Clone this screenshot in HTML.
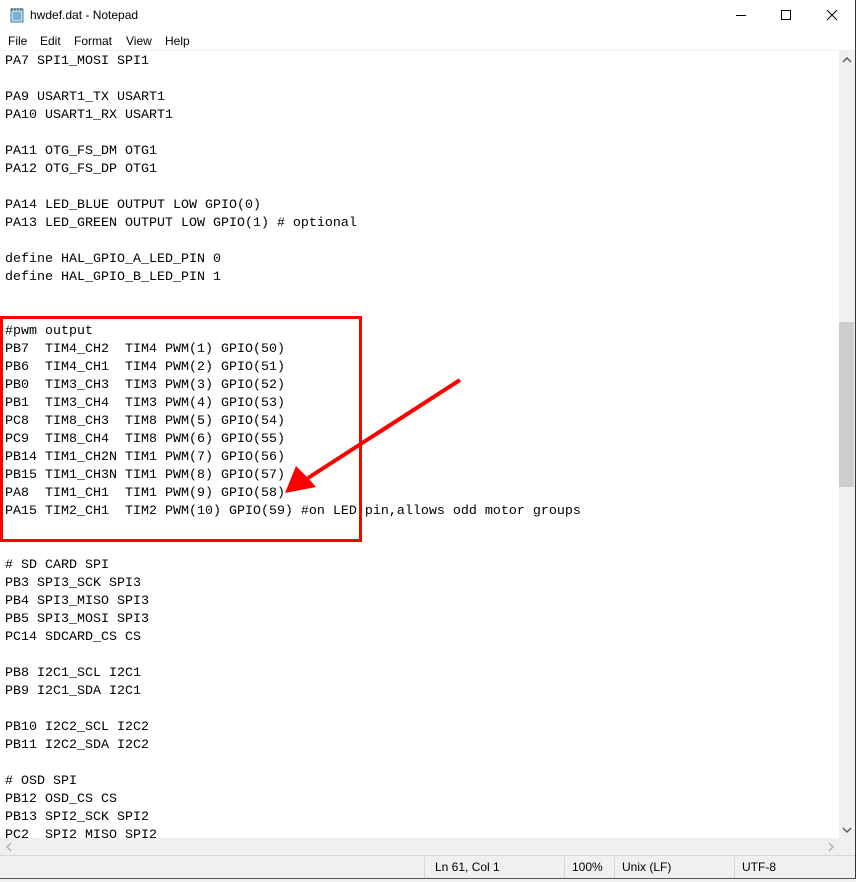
<!DOCTYPE html>
<html><head><meta charset="utf-8"><style>
*{margin:0;padding:0;box-sizing:border-box}
body{width:856px;height:882px;background:#f0f0f0;position:relative;overflow:hidden;font-family:"Segoe UI","Liberation Sans",sans-serif}
.win{position:absolute;left:0;top:0;width:856px;height:879px;background:#fff;border-right:1px solid #333;border-bottom:1px solid #555}
.title{position:absolute;left:0;top:0;width:855px;height:31px;background:#fff}
.title .t{position:absolute;left:30px;top:8px;font-size:12px;color:#000}
.menu{position:absolute;left:0;top:33px;height:17px;width:855px;font-size:12px}
.menu span{position:absolute;top:1px}
.sep{position:absolute;left:0;top:50px;width:855px;height:1px;background:#f0f0f0}
.txt{position:absolute;left:0;top:51px;width:839px;height:787px;overflow:hidden}
pre{position:absolute;left:5px;top:2px;font-family:"Liberation Mono",monospace;font-size:13.33px;line-height:18px;color:#000}
.vs{position:absolute;left:839px;top:51px;width:16px;height:787px;background:#f0f0f0}
.thumb{position:absolute;left:839px;top:322px;width:15px;height:165px;background:#cdcdcd}
.hs{position:absolute;left:0;top:838px;width:839px;height:17px;background:#f0f0f0}
.corner{position:absolute;left:839px;top:838px;width:16px;height:17px;background:#f0f0f0}
.status{position:absolute;left:0;top:855px;width:855px;height:23px;background:#f0f0f0;border-top:1px solid #d7d7d7;font-size:12px}
.status span{position:absolute;top:4px}
.status i{position:absolute;top:1px;width:1px;height:21px;background:#d7d7d7}
</style></head><body>
<div class="win">
<div class="title">
<svg style="position:absolute;left:9px;top:7px" width="16" height="16" viewBox="0 0 16 16"><rect x="2" y="2" width="12" height="13" fill="#b9dcf2" stroke="#4a7fa8"/><path d="M4 6h8M4 8h8M4 10h8M4 12h8" stroke="#4a7fa8"/><path d="M3 1v3M6 1v3M9 1v3M12 1v3" stroke="#555"/></svg>
<span class="t">hwdef.dat - Notepad</span>
<div style="position:absolute;left:736px;top:15px;width:10px;height:1px;background:#000"></div>
<div style="position:absolute;left:781px;top:10px;width:10px;height:10px;border:1px solid #000"></div>
<svg style="position:absolute;left:826px;top:9px" width="12" height="12"><path d="M1 1L11 11M11 1L1 11" stroke="#000" stroke-width="1"/></svg>
</div>
<div class="menu"><span style="left:8px">File</span><span style="left:40px">Edit</span><span style="left:74px">Format</span><span style="left:126px">View</span><span style="left:165px">Help</span></div>
<div class="sep"></div>
<div class="txt"><pre>PA7 SPI1_MOSI SPI1

PA9 USART1_TX USART1
PA10 USART1_RX USART1

PA11 OTG_FS_DM OTG1
PA12 OTG_FS_DP OTG1

PA14 LED_BLUE OUTPUT LOW GPIO(0)
PA13 LED_GREEN OUTPUT LOW GPIO(1) # optional

define HAL_GPIO_A_LED_PIN 0
define HAL_GPIO_B_LED_PIN 1


#pwm output
PB7  TIM4_CH2  TIM4 PWM(1) GPIO(50)
PB6  TIM4_CH1  TIM4 PWM(2) GPIO(51)
PB0  TIM3_CH3  TIM3 PWM(3) GPIO(52)
PB1  TIM3_CH4  TIM3 PWM(4) GPIO(53)
PC8  TIM8_CH3  TIM8 PWM(5) GPIO(54)
PC9  TIM8_CH4  TIM8 PWM(6) GPIO(55)
PB14 TIM1_CH2N TIM1 PWM(7) GPIO(56)
PB15 TIM1_CH3N TIM1 PWM(8) GPIO(57)
PA8  TIM1_CH1  TIM1 PWM(9) GPIO(58)
PA15 TIM2_CH1  TIM2 PWM(10) GPIO(59) #on LED pin,allows odd motor groups


# SD CARD SPI
PB3 SPI3_SCK SPI3
PB4 SPI3_MISO SPI3
PB5 SPI3_MOSI SPI3
PC14 SDCARD_CS CS

PB8 I2C1_SCL I2C1
PB9 I2C1_SDA I2C1

PB10 I2C2_SCL I2C2
PB11 I2C2_SDA I2C2

# OSD SPI
PB12 OSD_CS CS
PB13 SPI2_SCK SPI2
PC2  SPI2_MISO SPI2</pre></div>
<div class="vs"></div>
<div class="thumb"></div>
<svg style="position:absolute;left:842px;top:57px" width="10" height="6"><path d="M1 5L5 1L9 5" stroke="#606060" fill="none" stroke-width="1.5"/></svg>
<svg style="position:absolute;left:842px;top:827px" width="10" height="6"><path d="M1 1L5 5L9 1" stroke="#606060" fill="none" stroke-width="1.5"/></svg>
<div class="hs"></div>
<svg style="position:absolute;left:6px;top:842px" width="6" height="10"><path d="M5 1L1 5L5 9" stroke="#b0b0b0" fill="none" stroke-width="1.5"/></svg>
<svg style="position:absolute;left:828px;top:842px" width="6" height="10"><path d="M1 1L5 5L1 9" stroke="#b0b0b0" fill="none" stroke-width="1.5"/></svg>
<div class="corner"></div>
<div class="status">
<i style="left:424px"></i><i style="left:564px"></i><i style="left:614px"></i><i style="left:734px"></i>
<span style="left:435px">Ln 61, Col 1</span><span style="left:572px">100%</span><span style="left:622px">Unix (LF)</span><span style="left:742px">UTF-8</span>
</div>
<svg style="position:absolute;left:0;top:0" width="856" height="882">
<rect x="1.5" y="317.5" width="359" height="223" fill="none" stroke="#ff0000" stroke-width="3"/>
<line x1="460" y1="380" x2="308" y2="478" stroke="#ff0000" stroke-width="4"/>
<polygon points="285,493 296,466 308,478 316,487" fill="#ff0000"/>
</svg>
</div>
</body></html>
